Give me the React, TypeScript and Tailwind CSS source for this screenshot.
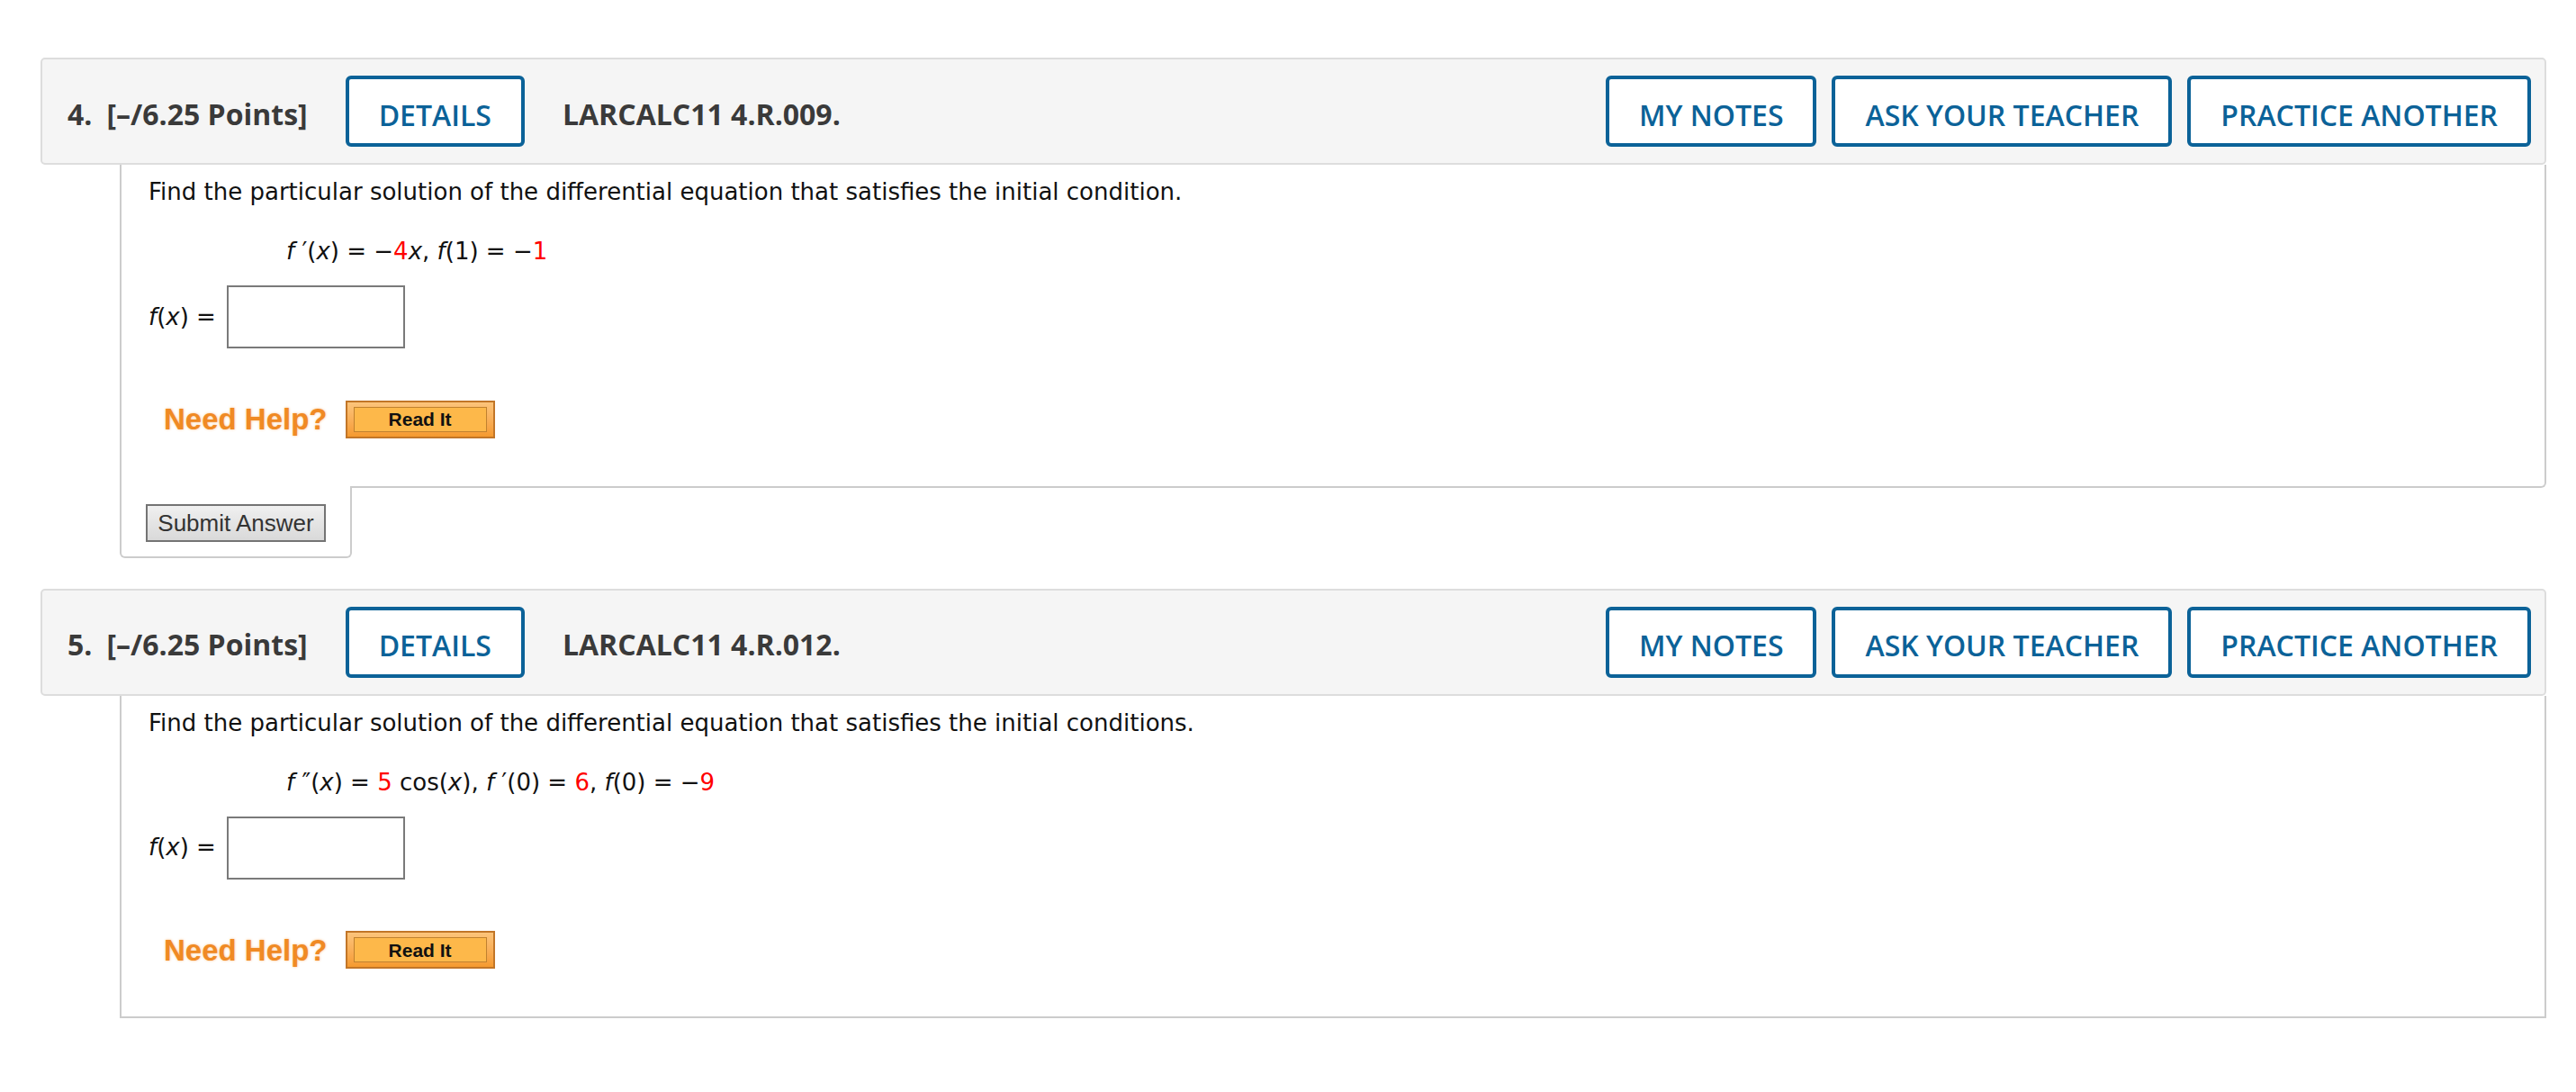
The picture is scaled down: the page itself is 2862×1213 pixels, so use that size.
import type { ReactNode } from 'react';

const headFont = { fontFamily: '"Open Sans", "Liberation Sans", sans-serif' };
const bodyFont = { fontFamily: '"DejaVu Sans", Verdana, sans-serif' };
const arial = { fontFamily: '"Liberation Sans", Arial, sans-serif' };

function OutlineButton({ label }: { label: string }) {
  return (
    <button
      className="h-[79px] px-[33px] pt-[8px] border-4 border-[#0b6298] rounded-[6px] bg-white text-[#0b6298] text-[32px] font-semibold whitespace-nowrap"
      style={headFont}
    >
      {label}
    </button>
  );
}

function ReadIt() {
  return (
    <div className="w-[166px] h-[42px] border-2 border-[#c27628] bg-gradient-to-b from-[#fcc47a] to-[#f59a2e] px-[7px] py-[5px]">
      <div
        className="h-full border border-[#c0812f] bg-[#fdb84a] flex items-center justify-center text-[21px] font-bold text-[#111]"
        style={arial}
      >
        Read It
      </div>
    </div>
  );
}

const I = ({ children }: { children: ReactNode }) => <span className="italic">{children}</span>;
const R = ({ children }: { children: ReactNode }) => <span className="text-[#ff0000]">{children}</span>;

interface QuestionProps {
  num: number;
  code: string;
  prompt: string;
  equation: ReactNode;
  submit?: boolean;
}

function Question({ num, code, prompt, equation, submit }: QuestionProps) {
  return (
    <div>
      <div className="flex items-center py-[18px] pl-[28px] pr-[15px] bg-[#f5f5f5] border-2 border-[#dddddd] rounded-[5px]" style={headFont}>
        <span className="mt-[6px] text-[32px] font-bold text-[#3a3a3a]">{num}.</span>
        <span className="mt-[6px] ml-[16px] text-[32px] font-bold text-[#3a3a3a]">[–/6.25 Points]</span>
        <div className="ml-[42px]">
          <OutlineButton label="DETAILS" />
        </div>
        <span className="mt-[6px] ml-[42px] text-[32px] font-bold text-[#3a3a3a]">{code}</span>
        <div className="ml-auto flex gap-[17px]">
          <OutlineButton label="MY NOTES" />
          <OutlineButton label="ASK YOUR TEACHER" />
          <OutlineButton label="PRACTICE ANOTHER" />
        </div>
      </div>

      <div
        className={
          'ml-[88px] border-x-2 border-b-2 border-[#cccccc] bg-white pl-[30px] pt-[14px] pb-[49px] ' +
          (submit ? 'rounded-br-[6px]' : '')
        }
        style={bodyFont}
      >
        <p className="text-[26px] leading-[32px] text-[#111]">{prompt}</p>
        <p className="mt-[34px] pl-[153px] text-[26px] leading-[32px] text-[#111]">{equation}</p>
        <div className="mt-[22px] flex items-center">
          <span className="w-[87px] text-[26px] text-[#111]">
            <I>f</I>(<I>x</I>) =
          </span>
          <div className="w-[198px] h-[70px] border-2 border-[#7a7a7a] bg-white" />
        </div>
        <div className="mt-[54px] flex items-center pl-[17px]">
          <span
            className="text-[33px] font-bold text-[#f08a24] [text-shadow:0_0_3px_#f9c08a]"
            style={arial}
          >
            Need Help?
          </span>
          <div className="ml-[20px]">
            <ReadIt />
          </div>
        </div>
      </div>

      {submit && (
        <div className="ml-[88px] -mt-[2px] w-[258px] border-x-2 border-b-2 border-[#cccccc] rounded-b-[6px] bg-white pl-[27px] pt-[20px] pb-[16px]">
          <button
            className="w-[200px] h-[42px] border-2 border-[#747474] bg-gradient-to-b from-[#f0f0f0] to-[#d9d9d9] text-[26px] text-[#333]"
            style={arial}
          >
            Submit Answer
          </button>
        </div>
      )}
    </div>
  );
}

export default function App() {
  return (
    <div className="min-h-screen bg-white pt-[64px] pl-[45px] pr-[33px]">
      <Question
        num={4}
        code="LARCALC11 4.R.009."
        prompt="Find the particular solution of the differential equation that satisfies the initial condition."
        equation={
          <>
            <I>f</I> ′(<I>x</I>) = −<R>4</R><I>x</I>, <I>f</I>(1) = −<R>1</R>
          </>
        }
        submit
      />
      <div className="mt-[34px]">
        <Question
          num={5}
          code="LARCALC11 4.R.012."
          prompt="Find the particular solution of the differential equation that satisfies the initial conditions."
          equation={
            <>
              <I>f</I> ″(<I>x</I>) = <R>5</R> cos(<I>x</I>), <I>f</I> ′(0) = <R>6</R>, <I>f</I>(0) = −<R>9</R>
            </>
          }
        />
      </div>
    </div>
  );
}
